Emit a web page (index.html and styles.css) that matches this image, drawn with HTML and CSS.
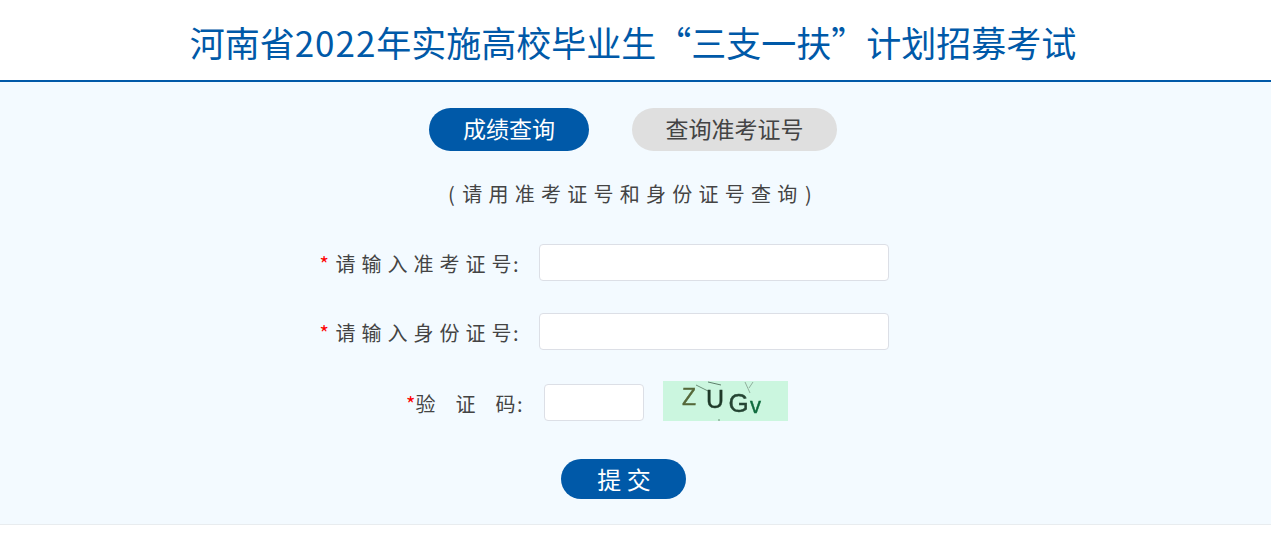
FILE: index.html
```html
<!DOCTYPE html>
<html lang="zh-CN">
<head>
<meta charset="utf-8">
<title>河南省2022年实施高校毕业生“三支一扶”计划招募考试</title>
<link rel="stylesheet" href="styles.css">
</head>
<body>
<header class="header"><h1 class="title">河南省<span class="digits">2022</span>年实施高校毕业生“三支一扶”计划招募考试</h1></header>
<main class="panel">
  <nav class="tabs">
    <a class="tab tab-active">成绩查询</a>
    <a class="tab tab-idle">查询准考证号</a>
  </nav>
  <p class="hint">( 请用准考证号和身份证号查询 )</p>
  <form class="form">
    <div class="row row-id">
      <label class="label"><span class="req">*</span> 请输入准考证<span class="tight">号:</span></label>
      <input class="input" type="text">
    </div>
    <div class="row row-card">
      <label class="label"><span class="req">*</span> 请输入身份证<span class="tight">号:</span></label>
      <input class="input" type="text">
    </div>
    <div class="row row-code">
      <label class="label label-code"><span class="req">*</span><span class="wide">验证</span><span class="tight">码:</span></label>
      <input class="input input-code" type="text">
      <svg class="captcha" width="125" height="40" viewBox="0 0 125 40">
        <rect width="125" height="40" fill="#cbf6df"/>
        <g class="captcha-ink">
          <g class="captcha-noise">
            <path d="M33 4L45 10" stroke="#6b8f78"/>
            <path d="M45 1L58 4" stroke="#5f7f6c"/>
            <path d="M82 1L87 12M90 1L86 7" stroke="#8fae9c"/>
            <path d="M56 38L56 40" stroke="#6b8f78"/>
          </g>
          <text class="cap cap-z" x="19" y="24">Z</text>
          <text class="cap cap-u" x="43" y="27">U</text>
          <text class="cap cap-g" x="65.5" y="31">G</text>
          <text class="cap cap-v" x="87" y="32">v</text>
        </g>
      </svg>
    </div>
    <div class="actions"><button class="submit" type="button">提 交</button></div>
  </form>
</main>
</body>
</html>
```
FILE: styles.css
```css
* { box-sizing: border-box; }
html, body { margin: 0; padding: 0; }
body {
  background: #fff;
  font-family: "Noto Sans CJK SC", "Liberation Sans", sans-serif;
  color: #444;
}
.header {
  height: 82px;
  border-bottom: 2px solid #0059a8;
  display: flex;
  justify-content: center;
  padding: 6px 5px 0 0;
}
.title {
  margin: 0;
  font-size: 35px;
  font-weight: 400;
  line-height: 72px;
  color: #0059a8;
  white-space: nowrap;
  font-family: "Noto Sans CJK SC", sans-serif;
}
.digits { letter-spacing: 1px; }
.panel {
  height: 443px;
  background: #f3faff;
  border-bottom: 1px solid #e8ecef;
  padding-top: 26px;
}
.tabs {
  display: flex;
  padding-left: 429px;
  gap: 43px;
}
.tab {
  height: 43px;
  border-radius: 22px;
  display: flex;
  align-items: center;
  justify-content: center;
  font-size: 23px;
  line-height: 41px;
  padding-bottom: 2px;
}
.tab-active { width: 160px; background: #0059a8; color: #fff; }
.tab-idle { width: 205px; background: #dfdfdf; color: #444; }
.hint {
  margin: 29px 0 0;
  height: 28px;
  line-height: 28px;
  font-size: 20px;
  letter-spacing: 6.25px;
  text-align: center;
  word-spacing: -9.25px;
  width: 1266px;
  color: #444;
}
.form { margin-top: 36px; }
.row { display: flex; align-items: center; }
.row-card { margin-top: 32px; }
.row-code { margin-top: 31px; height: 40px; align-items: flex-end; }
.label {
  width: 520px;
  margin-right: 19px;
  text-align: right;
  font-size: 20px;
  letter-spacing: 6px;
  white-space: nowrap;
  line-height: 26px;
  padding-top: 2px;
  word-spacing: -6px;
}
.label-code { width: 524px; margin-right: 20px; letter-spacing: 0; align-self: center; margin-top: 3px; }
.req { color: #f00; letter-spacing: 2px; }
.tight { letter-spacing: 1.5px; }
.wide { letter-spacing: 20px; }
.label-code .req { letter-spacing: 0; }
.input {
  width: 350px;
  height: 37px;
  background: #fff;
  border: 1px solid #dcdfe6;
  border-radius: 4px;
  outline: none;
  padding: 0 10px;
}
.input-code { width: 100px; }
.captcha { display: block; margin-left: 19px; }
.captcha-ink { filter: blur(0.35px); }
.captcha-noise { fill: none; stroke-width: 1; }
.cap { font-family: "Liberation Sans", sans-serif; stroke-width: 0.4px; }
.cap-z { font-size: 23px; fill: #56693a; stroke: #56693a; }
.cap-u { font-size: 25px; fill: #1f3a29; stroke: #1f3a29; }
.cap-g { font-size: 26px; fill: #254433; stroke: #254433; }
.cap-v { font-size: 22px; fill: #0f6b3e; stroke: #0f6b3e; }
.actions { margin-top: 38px; padding-left: 561px; }
.submit {
  display: block;
  width: 125px;
  height: 40px;
  border: 0;
  border-radius: 20px;
  background: #0059a8;
  color: #fff;
  font-family: "Noto Sans CJK SC", sans-serif;
  font-size: 24px;
  line-height: 40px;
  padding: 0 0 0 1px;
}
```
